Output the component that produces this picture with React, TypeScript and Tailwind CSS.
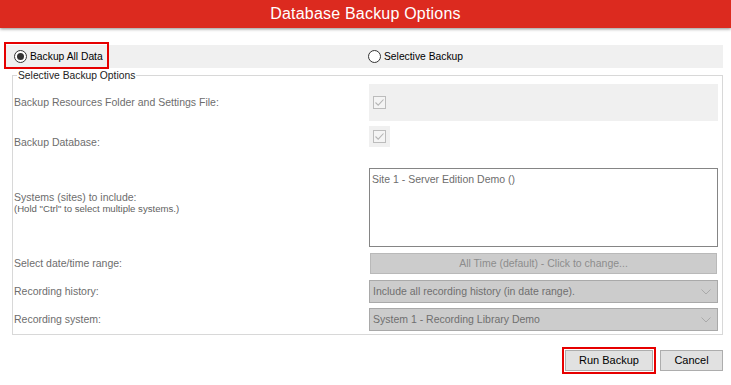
import React from "react";

const font = { fontFamily: '"Liberation Sans", Arial, sans-serif' };

function Radio({ checked }: { checked?: boolean }) {
  return (
    <span className="w-[13px] h-[13px] rounded-full border border-[#333333] bg-white flex items-center justify-center shrink-0">
      {checked && <span className="w-[7px] h-[7px] rounded-full bg-[#333333]" />}
    </span>
  );
}

function Check() {
  return (
    <span className="w-[13px] h-[13px] border border-[#bcbcbc] bg-[#f4f4f4] flex items-center justify-center shrink-0">
      <svg width="11" height="11" viewBox="0 0 11 11">
        <path d="M1.5 5.5 L4.2 8.2 L9.5 2.5" fill="none" stroke="#b5b5b5" strokeWidth="1.1" />
      </svg>
    </span>
  );
}

function Chevron() {
  return (
    <svg width="10" height="6" viewBox="0 0 10 6" className="shrink-0">
      <path d="M0.5 0.5 L5 5 L9.5 0.5" fill="none" stroke="#a9a9a9" strokeWidth="1" />
    </svg>
  );
}

export default function App() {
  return (
    <div
      className="w-[731px] h-[385px] bg-white overflow-hidden flex flex-col text-[10.5px] text-[#6d6d6d]"
      style={font}
    >
      <div className="h-[28px] shrink-0 bg-[#dc2a1f] flex items-center justify-center text-white text-[16px] shadow-[0_1px_3px_rgba(0,0,0,0.45)] relative z-10">
        <span className="tracking-[0.2px]">Database Backup Options</span>
      </div>

      <div className="mt-[17px] ml-[6px] mr-[8px] h-[23px] bg-[#f0f0f0] flex relative text-[10.3px] text-black">
        <div className="w-[361px] flex items-center pl-[8px] gap-[3px]">
          <Radio checked />
          <span>Backup All Data</span>
        </div>
        <div className="flex-1 flex items-center pl-[1px] gap-[3px]">
          <Radio />
          <span>Selective Backup</span>
        </div>
        <div className="absolute left-[-2px] top-[-3px] w-[105px] h-[27px] border-2 border-[#e60000]" />
      </div>

      <fieldset className="mt-[1px] ml-[12px] mr-[8px] border border-[#d8d8d8] p-0 m-0 min-w-0">
        <legend className="ml-[4px] px-[1px] leading-[13px] text-[10.3px] text-[#222222]">
          Selective Backup Options
        </legend>
        <div className="pt-[2px] pb-[1px] pr-[4px] flex flex-col">
          <div className="flex h-[37px]">
            <div className="w-[356px] pl-[1px] flex items-center">Backup Resources Folder and Settings File:</div>
            <div className="flex-1 bg-[#f0f0f0] flex items-center pl-[4px]">
              <Check />
            </div>
          </div>

          <div className="flex h-[44px]">
            <div className="w-[356px] pl-[1px] flex items-center">Backup Database:</div>
            <div className="flex-1">
              <div className="mt-[5px] w-[21px] h-[21px] bg-[#f0f0f0] flex items-center justify-center">
                <Check />
              </div>
            </div>
          </div>

          <div className="flex h-[85px]">
            <div className="w-[356px] pl-[1px] pt-[26px] flex flex-col">
              <span className="leading-[13px]">Systems (sites) to include:</span>
              <span className="leading-[11px] text-[9.6px] mt-[-1px] text-[#5f5f5f]">(Hold "Ctrl" to select multiple systems.)</span>
            </div>
            <div className="flex-1">
              <div className="mt-[3px] h-[79px] border border-[#858585] bg-white px-[2px] pt-[4px] leading-[13px]">
                Site 1 - Server Edition Demo ()
              </div>
            </div>
          </div>

          <div className="flex h-[27px] items-center">
            <div className="w-[356px] pl-[1px]">Select date/time range:</div>
            <div className="flex-1 px-[1px]">
              <div className="h-[21px] bg-[#cccccc] border border-[#b9b9b9] flex items-center justify-center text-[#8c8c8c]">
                All Time (default) - Click to change...
              </div>
            </div>
          </div>

          <div className="flex h-[29px] items-center">
            <div className="w-[356px] pl-[1px]">Recording history:</div>
            <div className="flex-1">
              <div className="h-[23px] bg-[#cccccc] border border-[#a9a9a9] flex items-center justify-between pl-[3px] pr-[6px] text-[#6f6f6f]">
                <span>Include all recording history (in date range).</span>
                <Chevron />
              </div>
            </div>
          </div>

          <div className="flex h-[27px] items-center">
            <div className="w-[356px] pl-[1px]">Recording system:</div>
            <div className="flex-1">
              <div className="h-[23px] bg-[#cccccc] border border-[#a9a9a9] flex items-center justify-between pl-[3px] pr-[6px] text-[#6f6f6f]">
                <span>System 1 - Recording Library Demo</span>
                <Chevron />
              </div>
            </div>
          </div>
        </div>
      </fieldset>

      <div className="mt-[12px] mr-[8px] flex justify-end items-center gap-[4px] text-[11px] text-black">
        <div className="border-2 border-[#e60000] p-[1px]">
          <button className="w-[88px] h-[21px] bg-[#e1e1e1] border border-[#adadad] flex items-center justify-center">
            Run Backup
          </button>
        </div>
        <button className="w-[63px] h-[21px] bg-[#e1e1e1] border border-[#adadad] flex items-center justify-center">
          Cancel
        </button>
      </div>
    </div>
  );
}
